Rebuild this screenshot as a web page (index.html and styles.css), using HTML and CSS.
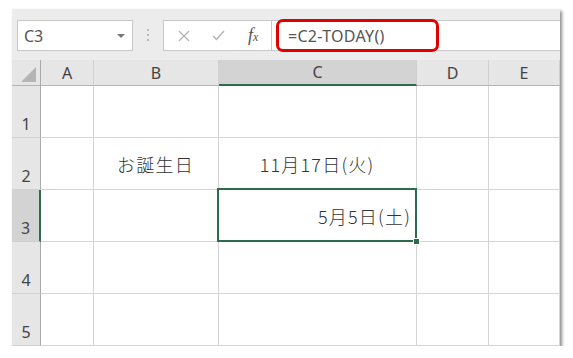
FILE: index.html
```html
<!DOCTYPE html>
<html lang="ja">
<head>
    <meta charset="utf-8">
    <title>Excel TODAY</title>
    <link rel="stylesheet" href="styles.css">
</head>
<body>
    <div class="window">
        <div class="toolbar">
            <div class="namebox">
                <span>C3</span>
                <span class="caret"></span>
            </div>
            <div class="sep"><i></i><i></i><i></i></div>
            <div class="fbuttons">
                <svg width="12" height="12" viewBox="0 0 12 12"><path d="M1 1 L11 11 M11 1 L1 11" stroke="#b4b4b4" stroke-width="1.3" fill="none"/></svg>
                <svg width="13" height="11" viewBox="0 0 13 11"><path d="M1 6 L4.5 9.5 L12 1" stroke="#b4b4b4" stroke-width="1.5" fill="none"/></svg>
                <span class="fx">f<small>x</small></span>
            </div>
            <div class="formula">
                <span class="mark">=C2-TODAY()</span>
            </div>
        </div>

        <div class="sheet">
            <div class="hd corner"><span class="tri"></span></div>
            <div class="hd col">A</div>
            <div class="hd col">B</div>
            <div class="hd col sel">C</div>
            <div class="hd col">D</div>
            <div class="hd col">E</div>

            <div class="hd row">1</div>
            <div class="cell"></div>
            <div class="cell"></div>
            <div class="cell"></div>
            <div class="cell"></div>
            <div class="cell"></div>

            <div class="hd row">2</div>
            <div class="cell"></div>
            <div class="cell center">お誕生日</div>
            <div class="cell center">11月17日(火)</div>
            <div class="cell"></div>
            <div class="cell"></div>

            <div class="hd row sel">3</div>
            <div class="cell"></div>
            <div class="cell"></div>
            <div class="cell right active">5月5日(土)<span class="handle"></span></div>
            <div class="cell"></div>
            <div class="cell"></div>

            <div class="hd row">4</div>
            <div class="cell"></div>
            <div class="cell"></div>
            <div class="cell"></div>
            <div class="cell"></div>
            <div class="cell"></div>

            <div class="hd row">5</div>
            <div class="cell"></div>
            <div class="cell"></div>
            <div class="cell"></div>
            <div class="cell"></div>
            <div class="cell"></div>
        </div>
    </div>
</body>
</html>
```

FILE: styles.css
```css
* {
    box-sizing: border-box;
}

body {
    margin: 0;
    padding: 9px 0 0 12px;
    background-color: #fff;
    font-family: "Noto Sans", "Noto Sans CJK JP", sans-serif;
}

.window {
    width: 548px;
    background-color: #ececec;
    box-shadow: 2px 2px 3px rgba(0, 0, 0, 0.45);
}

.toolbar {
    display: flex;
    align-items: flex-start;
    height: 51px;
    padding: 11px 0 0 5px;
}

.namebox {
    display: flex;
    align-items: center;
    justify-content: space-between;
    width: 116px;
    height: 31px;
    padding: 0 7px 0 6px;
    background-color: #fff;
    border: 1px solid #c8c8c8;
    color: #555;
    font-size: 16px;
}

.caret {
    width: 0;
    height: 0;
    border-left: 4px solid transparent;
    border-right: 4px solid transparent;
    border-top: 4px solid #777;
}

.sep {
    display: flex;
    flex-direction: column;
    align-items: center;
    gap: 3px;
    width: 30px;
    padding-top: 9px;
}

.sep i {
    width: 2px;
    height: 2px;
    background-color: #b8b8b8;
}

.fbuttons {
    display: flex;
    align-items: center;
    width: 109px;
    height: 31px;
    padding: 0 8px 0 14px;
    gap: 22px;
    background-color: #fff;
    border: 1px solid #c8c8c8;
}

.fx {
    font-family: "Liberation Serif", serif;
    font-style: italic;
    font-size: 18px;
    color: #555;
    margin-left: 1px;
}

.fx small {
    font-size: 12px;
}

.formula {
    flex: 1;
    display: flex;
    align-items: center;
    height: 31px;
    padding-left: 4px;
    background-color: #fff;
    border-top: 1px solid #c8c8c8;
    border-bottom: 1px solid #c8c8c8;
}

.mark {
    display: flex;
    align-items: center;
    width: 163px;
    height: 33px;
    margin: -1px 0;
    padding-left: 9px;
    border: 3px solid #e00000;
    border-radius: 7px;
    color: #555;
    font-size: 16px;
    letter-spacing: 0.3px;
}

.sheet {
    display: grid;
    grid-template-columns: 29px 53px 125px 198px 72px 1fr;
    grid-template-rows: 26px repeat(5, 52px);
    background-color: #fff;
}

.hd {
    background-color: #e6e6e6;
    color: #444;
    font-size: 16px;
}

.hd.col {
    display: flex;
    align-items: center;
    justify-content: center;
    border-right: 1px solid #d0d0d0;
    border-bottom: 1px solid #b4b4b4;
}

.hd.col.sel {
    background-color: #d3d3d3;
    border-bottom: 2px solid #2e6b4b;
}

.hd.row {
    display: flex;
    align-items: flex-end;
    justify-content: center;
    padding-bottom: 2px;
    border-right: 1px solid #a9a9a9;
    border-bottom: 1px solid #d0d0d0;
}

.hd.row.sel {
    background-color: #d3d3d3;
    border-right: 2px solid #2e6b4b;
}

.corner {
    position: relative;
    border-right: 1px solid #a9a9a9;
    border-bottom: 1px solid #b4b4b4;
}

.tri {
    position: absolute;
    right: 4px;
    bottom: 3px;
    width: 0;
    height: 0;
    border-left: 15px solid transparent;
    border-bottom: 15px solid #b5b5b5;
}

.cell {
    display: flex;
    align-items: center;
    padding: 0 5px 0 4px;
    border-right: 1px solid #d4d4d4;
    border-bottom: 1px solid #d4d4d4;
    color: #333;
    font-family: "Noto Sans CJK JP", sans-serif;
    font-size: 18px;
    font-weight: 300;
    letter-spacing: 1.2px;
}

.cell.center {
    justify-content: center;
}

.cell.right {
    justify-content: flex-end;
}

.cell.active {
    position: relative;
}

.cell.active::after {
    content: "";
    position: absolute;
    top: -2px;
    left: -2px;
    right: -1px;
    bottom: -1px;
    border: 2px solid #2e6b4b;
}

.handle {
    position: absolute;
    right: -4px;
    bottom: -4px;
    width: 7px;
    height: 7px;
    background-color: #2e6b4b;
    border: 1px solid #fff;
    z-index: 1;
}
```
